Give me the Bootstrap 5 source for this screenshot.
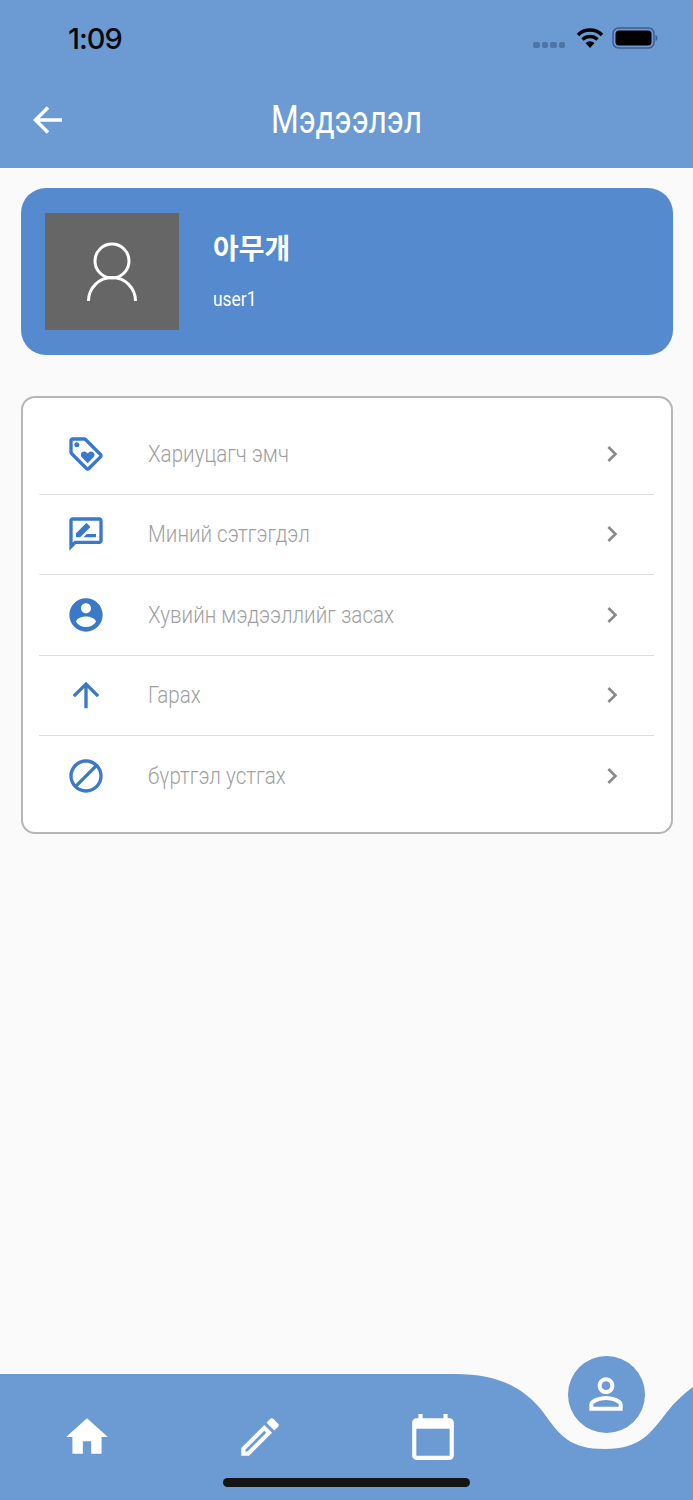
<!DOCTYPE html>
<html lang="en">
<head>
  <meta charset="UTF-8">
  <meta name="viewport" content="width=device-width, initial-scale=1.0">
  <link href="https://cdn.jsdelivr.net/npm/bootstrap@5.3.0/dist/css/bootstrap.min.css" rel="stylesheet">
  <title>Мэдээлэл</title>
  <style>
    body { background: #fafafa; font-family: Roboto, "Noto Sans CJK KR", sans-serif; min-height: 1500px; }
    .app-head { background: #6c9ad2; height: 168px; }
    .status-row { height: 80px; padding: 0 35px 4px 68px; }
    .clock { font: 500 29px/1 Inter, "Liberation Sans", sans-serif; color: #0a0a0a; letter-spacing: -1px; }
    .sig-dots { gap: 2px; margin-top: 14px; margin-right: 11px; }
    .sig-dots i { width: 6.5px; height: 6.5px; border-radius: 2px; background: #4f74a6; display: block; }
    .title-row { height: 80px; }
    .back-btn { position: absolute; left: 32.5px; top: 25px; }
    .page-title { font: 400 38px/1 Roboto, sans-serif; color: #fff; transform: scaleX(.835); }
    .profile-card { background: #558ace; border-radius: 25px; height: 167px; margin: 20px 20.5px 40.5px; padding: 25px 24.5px; gap: 34px; }
    .avatar-box { width: 134px; height: 117px; background: #666; }
    .user-name { font: 700 28px/1 "Noto Sans CJK KR", sans-serif; color: #fff; margin-bottom: 28px; margin-top: -2px; }
    .user-id { font: 400 20px/1 Roboto, sans-serif; color: #fff; transform: scaleX(.87); transform-origin: left; }
    .menu-card { margin: 0 20.5px; border: 2px solid #b6b6b6; border-radius: 14px; padding: 16.5px 17px 15.5px 16px; background: #fff; }
    .menu-row { height: 80.5px; border-color: #dedede; padding: 0 26px 0 27px; background: transparent; }
    .menu-text { font: 300 24.5px/1 Roboto, sans-serif; color: #9f9f9f; margin-left: 42.5px; transform: scaleX(.84); transform-origin: left; }
    .tab-bar { height: 126px; margin-top: auto; }
    .tab-wave { position: absolute; left: 0; top: 0; }
    .tab-cell { flex: 1 1 25%; height: 126px; padding-top: 38px; }
    .fab-btn { position: absolute; left: 567.5px; top: -18.5px; width: 77px; height: 77px; background: #6c9ad2; }
    .home-bar { position: absolute; left: 223px; top: 104px; width: 247px; height: 9px; border-radius: 5px; background: #141414; }
  </style>
</head>
<body class="d-flex flex-column">
  <header class="app-head">
    <div class="status-row d-flex align-items-center">
      <span class="clock me-auto">1:09</span>
      <div class="sig-dots d-flex"><i></i><i></i><i></i><i></i></div>
      <svg width="28" height="22" viewBox="0 0 28 22" class="me-2"><path d="M2 8a17 17 0 0 1 24 0M6.500 12.500a11 11 0 0 1 15 0" fill="none" stroke="#000" stroke-width="3.400"/><path d="M9.500 16a7 7 0 0 1 9 0L14 21z" fill="#000"/></svg>
      <svg width="46" height="24" viewBox="0 0 46 24"><rect x="1" y="2" width="41" height="20" rx="5.500" fill="none" stroke="#3f5f8c" stroke-width="1.500"/><rect x="3.500" y="4.500" width="36" height="15" rx="3.500" fill="#000"/><path d="M43.500 9c1.500.5 2 1.500 2 3s-.5 2.500-2 3z" fill="#3f5f8c"/></svg>
    </div>
    <div class="title-row position-relative d-flex align-items-center justify-content-center">
      <svg class="back-btn" width="30" height="30" viewBox="0 0 30 30"><path d="M29 15H3M15 2.500 2.500 15 15 27.500" fill="none" stroke="#fff" stroke-width="3.400"/></svg>
      <span class="page-title">Мэдээлэл</span>
    </div>
  </header>

  <section class="profile-card d-flex">
    <div class="avatar-box d-flex align-items-center justify-content-center">
      <svg width="60" height="66" viewBox="0 0 60 66"><circle cx="30" cy="22" r="17" fill="none" stroke="#fff" stroke-width="3"/><path d="M6.500 62a23.500 23.500 0 0 1 47 0" fill="none" stroke="#fff" stroke-width="3"/></svg>
    </div>
    <div class="d-flex flex-column justify-content-center">
      <div class="user-name">아무개</div>
      <div class="user-id">user1</div>
    </div>
  </section>

  <div class="menu-card">
    <ul class="list-group list-group-flush">
      <li class="list-group-item menu-row d-flex align-items-center">
        <svg width="40" height="40" viewBox="0 0 24 24" fill="#3a78c8"><path d="M21.410 11.580l-9-9C12.050 2.220 11.550 2 11 2H4c-1.100 0-2 .9-2 2v7c0 .55.22 1.050.59 1.420l9 9c.36.36.86.58 1.410.58s1.050-.22 1.410-.59l7-7c.37-.36.59-.86.59-1.410s-.23-1.060-.59-1.420zM13 20.010L4 11V4h7v-.01l9 8.990-7 7.020z"/><circle cx="6.500" cy="6.500" r="1.500"/><path d="M8.900 12.550c0 .57.23 1.070.6 1.450l3.500 3.500 3.500-3.500c.37-.37.6-.89.6-1.450 0-1.130-.92-2.050-2.050-2.050-.57 0-1.080.23-1.450.6l-.6.6-.6-.59c-.37-.38-.89-.61-1.450-.61-1.130 0-2.050.92-2.050 2.050z"/></svg>
        <span class="menu-text me-auto">Хариуцагч эмч</span>
        <svg width="32" height="32" viewBox="0 0 24 24" fill="#8a8a8a"><path d="M10 6L8.590 7.410 13.170 12l-4.580 4.590L10 18l6-6z"/></svg>
      </li>
      <li class="list-group-item menu-row d-flex align-items-center">
        <svg width="40" height="40" viewBox="0 0 24 24" fill="#3a78c8"><path d="M20 2H4c-1.100 0-2 .9-2 2v18l4-4h14c1.100 0 2-.9 2-2V4c0-1.100-.9-2-2-2zm0 14H5.170l-.59.59-.58.58V4h16v12zm-9.500-2H18v-2h-5.500zm3.860-5.870c.2-.2.2-.51 0-.71l-1.770-1.770c-.2-.2-.51-.2-.71 0L6 11.530V14h2.470l5.890-5.870z"/></svg>
        <span class="menu-text me-auto">Миний сэтгэгдэл</span>
        <svg width="32" height="32" viewBox="0 0 24 24" fill="#8a8a8a"><path d="M10 6L8.590 7.410 13.170 12l-4.580 4.590L10 18l6-6z"/></svg>
      </li>
      <li class="list-group-item menu-row d-flex align-items-center">
        <svg width="40" height="40" viewBox="0 0 24 24" fill="#3a78c8"><path d="M12 2C6.480 2 2 6.480 2 12s4.480 10 10 10 10-4.480 10-10S17.520 2 12 2zm0 3c1.660 0 3 1.340 3 3s-1.340 3-3 3-3-1.340-3-3 1.340-3 3-3zm0 14.200c-2.500 0-4.710-1.280-6-3.220.03-1.990 4-3.080 6-3.080 1.990 0 5.970 1.090 6 3.080-1.290 1.940-3.500 3.220-6 3.220z"/></svg>
        <span class="menu-text me-auto">Хувийн мэдээллийг засах</span>
        <svg width="32" height="32" viewBox="0 0 24 24" fill="#8a8a8a"><path d="M10 6L8.590 7.410 13.170 12l-4.580 4.590L10 18l6-6z"/></svg>
      </li>
      <li class="list-group-item menu-row d-flex align-items-center">
        <svg width="40" height="40" viewBox="0 0 24 24" fill="#3a78c8"><path d="M4 12l1.410 1.410L11 7.830V20h2V7.830l5.580 5.590L20 12l-8-8-8 8z"/></svg>
        <span class="menu-text me-auto">Гарах</span>
        <svg width="32" height="32" viewBox="0 0 24 24" fill="#8a8a8a"><path d="M10 6L8.590 7.410 13.170 12l-4.580 4.590L10 18l6-6z"/></svg>
      </li>
      <li class="list-group-item menu-row d-flex align-items-center">
        <svg width="40" height="40" viewBox="0 0 24 24" fill="#3a78c8"><path d="M12 2C6.480 2 2 6.480 2 12s4.480 10 10 10 10-4.480 10-10S17.520 2 12 2zM4 12c0-4.420 3.580-8 8-8 1.850 0 3.550.63 4.900 1.690L5.690 16.900C4.630 15.550 4 13.850 4 12zm8 8c-1.850 0-3.550-.63-4.900-1.690L18.310 7.100C19.370 8.450 20 10.150 20 12c0 4.420-3.580 8-8 8z"/></svg>
        <span class="menu-text me-auto">бүртгэл устгах</span>
        <svg width="32" height="32" viewBox="0 0 24 24" fill="#8a8a8a"><path d="M10 6L8.590 7.410 13.170 12l-4.580 4.590L10 18l6-6z"/></svg>
      </li>
    </ul>
  </div>

  <footer class="tab-bar position-relative">
    <svg class="tab-wave" width="693" height="126" viewBox="0 0 693 126"><path d="M0 0H455C500 0 525 15 543 38C560 62 570 75 605 75C640 75 650 60 667 38C675 28 683 20 693 13V126H0Z" fill="#6c9ad2"/></svg>
    <div class="d-flex position-relative">
      <div class="tab-cell d-flex justify-content-center">
        <svg width="50" height="50" viewBox="0 0 24 24" fill="#fff"><path d="M10 20v-6h4v6h5v-8h3L12 3 2 12h3v8z"/></svg>
      </div>
      <div class="tab-cell d-flex justify-content-center">
        <svg width="50" height="50" viewBox="0 0 24 24" fill="#fff"><path d="M3 17.250V21h3.750L17.810 9.940l-3.750-3.750L3 17.250zM5.920 19H5v-.92l9.060-9.060.92.92L5.920 19zM20.710 7.040c.39-.39.39-1.020 0-1.410l-2.340-2.340c-.2-.2-.45-.29-.71-.29s-.51.09-.7.28l-1.830 1.830 3.750 3.750 1.830-1.820z"/></svg>
      </div>
      <div class="tab-cell d-flex justify-content-center">
        <svg width="50" height="50" viewBox="0 0 24 24" fill="#fff"><path d="M20 3h-1V1h-2v2H7V1H5v2H4c-1.100 0-2 .9-2 2v16c0 1.100.9 2 2 2h16c1.100 0 2-.9 2-2V5c0-1.100-.9-2-2-2zm0 18H4V8h16v13z"/></svg>
      </div>
      <div class="tab-cell"></div>
    </div>
    <div class="fab-btn rounded-circle d-flex align-items-center justify-content-center">
      <svg width="50" height="50" viewBox="0 0 24 24" fill="#fff"><path d="M12 5.900c1.160 0 2.100.94 2.100 2.100s-.94 2.100-2.100 2.100S9.900 9.160 9.900 8s.94-2.100 2.100-2.100m0 9c2.970 0 6.100 1.460 6.100 2.100v1.100H5.900V17c0-.64 3.130-2.100 6.100-2.100M12 4C9.790 4 8 5.790 8 8s1.790 4 4 4 4-1.790 4-4-1.790-4-4-4zm0 9c-2.670 0-8 1.340-8 4v3h16v-3c0-2.660-5.330-4-8-4z"/></svg>
    </div>
    <div class="home-bar"></div>
  </footer>
  <script src="https://cdn.jsdelivr.net/npm/bootstrap@5.3.0/dist/js/bootstrap.bundle.min.js"></script>
</body>
</html>
